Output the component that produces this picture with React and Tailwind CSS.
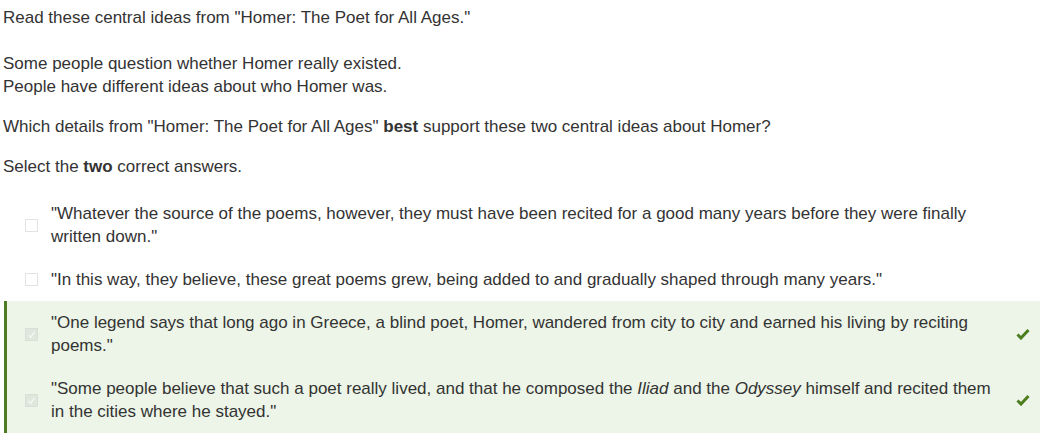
import React from "react";

function Check() {
  return (
    <svg width="14" height="12" viewBox="0 0 14 12">
      <path d="M1.5 6.5 L5 10 L12.5 2" fill="none" stroke="#4b7d1d" strokeWidth="3" />
    </svg>
  );
}

function Row({ children, correct }) {
  return (
    <div
      className={
        "flex items-center ml-[4px] w-[1036px] " +
        (correct ? "bg-[#ecf5e7] border-l-[3px] border-[#4d7a22]" : "border-l-[3px] border-transparent")
      }
    >
      <div className="flex items-center w-full py-[10px]">
        <div className="w-[44px] shrink-0 flex items-center pl-[18px]">
          {correct ? (
            <div className="w-[13px] h-[13px] bg-[#dfe6dc] border border-[#d9dfd6] flex items-center justify-center">
              <svg width="9" height="9" viewBox="0 0 10 10">
                <path d="M1.5 5.5 L4 8 L8.5 2" fill="none" stroke="#f2f5f0" strokeWidth="1.8" />
              </svg>
            </div>
          ) : (
            <div className="w-[13px] h-[13px] bg-white border border-[#e3e3e3]"></div>
          )}
        </div>
        <div className="w-[950px] shrink-0 leading-[23px]">{children}</div>
        <div className="flex-1 flex justify-end pr-[10px]">{correct ? <Check /> : null}</div>
      </div>
    </div>
  );
}

export default function App() {
  return (
    <div
      className="bg-white w-[1043px] h-[442px] overflow-hidden text-[17px] text-[#333333]"
      style={{ fontFamily: '"Liberation Sans", Arial, sans-serif' }}
    >
      <div className="pl-[3px] pt-[6px] leading-[23px]">
        <p>Read these central ideas from "Homer: The Poet for All Ages."</p>
        <p className="mt-[23px]">Some people question whether Homer really existed.</p>
        <p>People have different ideas about who Homer was.</p>
        <p className="mt-[17px]">
          Which details from "Homer: The Poet for All Ages" <b>best</b> support these two central ideas about Homer?
        </p>
        <p className="mt-[17px]">
          Select the <b>two</b> correct answers.
        </p>
      </div>
      <div className="mt-[14px] flex flex-col">
        <Row>
          "Whatever the source of the poems, however, they must have been recited for a good many years before they were finally written down."
        </Row>
        <Row>
          "In this way, they believe, these great poems grew, being added to and gradually shaped through many years."
        </Row>
        <Row correct>
          "One legend says that long ago in Greece, a blind poet, Homer, wandered from city to city and earned his living by reciting poems."
        </Row>
        <Row correct>
          "Some people believe that such a poet really lived, and that he composed the <i>Iliad</i> and the <i>Odyssey</i> himself and recited them in the cities where he stayed."
        </Row>
      </div>
    </div>
  );
}
